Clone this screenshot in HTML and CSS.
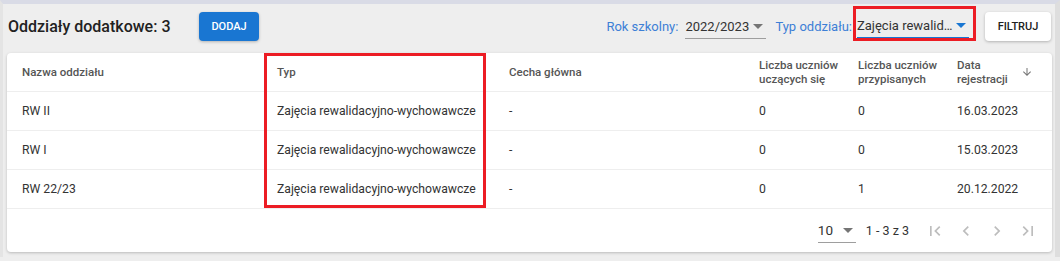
FILE: index.html
```html
<!DOCTYPE html>
<html lang="pl">
<head>
<meta charset="UTF-8" />
<title>Oddziały dodatkowe</title>
<link rel="stylesheet" href="styles.css">
</head>
<body>
<div class="page">

  <div class="toolbar">
    <h1 class="title">Oddziały dodatkowe: 3</h1>
    <button class="btn btn-primary">DODAJ</button>

    <div class="filters">
      <label class="filter-label">Rok szkolny:</label>
      <div class="select select-year">
        <span class="select-value">2022/2023</span>
        <span class="caret"></span>
      </div>
      <label class="filter-label label-type">Typ oddziału:</label>
      <div class="select select-type">
        <span class="select-value">Zajęcia rewalid…</span>
        <span class="caret caret-blue"></span>
        <span class="mark mark-filter"></span>
      </div>
      <button class="btn btn-light">FILTRUJ</button>
    </div>
  </div>

  <div class="card">
    <div class="row head">
      <div class="cell">Nazwa oddziału</div>
      <div class="cell">Typ</div>
      <div class="cell">Cecha główna</div>
      <div class="cell">Liczba uczniów<br>uczących się</div>
      <div class="cell">Liczba uczniów<br>przypisanych</div>
      <div class="cell sort">
        <span>Data<br>rejestracji</span>
        <svg width="12" height="12" viewBox="0 0 24 24"><path d="M20 12l-1.41-1.41L13 16.17V4h-2v12.17l-5.58-5.59L4 12l8 8 8-8z" fill="#757575"/></svg>
      </div>
    </div>

    <div class="row">
      <div class="cell">RW II</div>
      <div class="cell">Zajęcia rewalidacyjno-wychowawcze</div>
      <div class="cell">-</div>
      <div class="cell">0</div>
      <div class="cell">0</div>
      <div class="cell">16.03.2023</div>
    </div>
    <div class="row">
      <div class="cell">RW I</div>
      <div class="cell">Zajęcia rewalidacyjno-wychowawcze</div>
      <div class="cell">-</div>
      <div class="cell">0</div>
      <div class="cell">0</div>
      <div class="cell">15.03.2023</div>
    </div>
    <div class="row">
      <div class="cell">RW 22/23</div>
      <div class="cell">Zajęcia rewalidacyjno-wychowawcze</div>
      <div class="cell">-</div>
      <div class="cell">0</div>
      <div class="cell">1</div>
      <div class="cell">20.12.2022</div>
    </div>

    <div class="pager">
      <div class="select select-rows">
        <span class="select-value">10</span>
        <span class="caret"></span>
      </div>
      <span class="pager-info">1 - 3 z 3</span>
      <div class="pager-icons">
        <svg width="20" height="20" viewBox="0 0 24 24"><path d="M18.41 16.59L13.82 12l4.59-4.59L17 6l-6 6 6 6zM6 6h2v12H6z" fill="#bdbdbd"/></svg>
        <svg width="20" height="20" viewBox="0 0 24 24"><path d="M15.41 7.41L14 6l-6 6 6 6 1.41-1.41L10.83 12z" fill="#bdbdbd"/></svg>
        <svg width="20" height="20" viewBox="0 0 24 24"><path d="M10 6L8.59 7.41 13.17 12l-4.58 4.59L10 18l6-6z" fill="#bdbdbd"/></svg>
        <svg width="20" height="20" viewBox="0 0 24 24"><path d="M5.59 7.41L10.18 12l-4.59 4.59L7 18l6-6-6-6zM16 6h2v12h-2z" fill="#bdbdbd"/></svg>
      </div>
    </div>

    <span class="mark mark-column"></span>
  </div>

</div>
</body>
</html>
```

FILE: styles.css
```css
body {
  margin: 0;
  font-family: Roboto, "Liberation Sans", Arial, sans-serif;
  background: #eeeeee;
  color: #333;
}
.page {
  height: 257px;
  border-top: 4px solid #d9dbe6;
  border-left: 3px solid #e4e4e4;
  border-right: 5px solid #dedede;
  box-sizing: border-box;
  width: 1060px;
}
/* Toolbar */
.toolbar {
  display: flex;
  align-items: center;
  height: 45px;
  padding: 0 0 0 5px;
}
.title {
  margin: 0;
  font-size: 16px;
  font-weight: 500;
  color: #212121;
  width: 191px;
}
.btn {
  font-family: inherit;
  border: none;
  border-radius: 4px;
  height: 29px;
  font-size: 11px;
  font-weight: 500;
  cursor: pointer;
}
.btn-primary {
  background: #1976d2;
  color: #fff;
  width: 60px;
  box-shadow: 0 1px 3px rgba(0,0,0,0.25);
}
.btn-light {
  background: #fff;
  color: #212121;
  width: 66px;
  margin-left: 16px;
  box-shadow: 0 1px 3px rgba(0,0,0,0.25);
}
.filters {
  display: flex;
  align-items: center;
  margin-left: auto;
  margin-right: 4px;
}
.filter-label {
  color: #3d7fd6;
  font-size: 13px;
  margin-right: 7px;
  white-space: nowrap;
}
.label-type { margin-right: 5px; }
.select {
  position: relative;
  display: flex;
  align-items: center;
  height: 24px;
  border-bottom: 1px solid #9e9e9e;
  font-size: 13px;
  color: #333;
  white-space: nowrap;
}
.select-year { width: 81px; margin-right: 9px; }
.select-type {
  width: 112px;
  border-bottom: 2px solid #1976d2;
  height: 23px;
}
.select-value { flex: 1; }
.caret {
  width: 0; height: 0;
  border-left: 5px solid transparent;
  border-right: 5px solid transparent;
  border-top: 5px solid #757575;
  margin-right: 3px;
}
.caret-blue { border-top-color: #1976d2; }
/* Red highlight boxes */
.mark {
  position: absolute;
  border: 3px solid #ec1c24;
  box-sizing: border-box;
  pointer-events: none;
}
.mark-filter {
  left: -4px; top: -8px;
  width: 123px; height: 35px;
}
.mark-column {
  left: 257px; top: 0;
  width: 222px; height: 155px;
}
/* Table card */
.card {
  position: relative;
  margin: 4px 3px 0 4px;
  background: #fff;
  border-radius: 4px;
  box-shadow: 0 1px 3px rgba(0,0,0,0.22);
}
.row {
  display: grid;
  grid-template-columns: 256px 232px 250px 99px 99px 1fr;
  height: 38px;
  align-items: center;
  border-bottom: 1px solid #eeeeee;
  font-size: 12.2px;
  color: #333;
}
.row.head {
  font-size: 11.5px;
  font-weight: 500;
  color: #555;
  line-height: 14px;
}
.cell { padding-left: 15px; white-space: nowrap; }
.cell:nth-child(n+2) { padding-left: 14px; }
.sort {
  display: flex;
  align-items: center;
  justify-content: space-between;
  padding-right: 19px;
}
.pager {
  display: flex;
  align-items: center;
  justify-content: flex-end;
  height: 43px;
  font-size: 12.5px;
  color: #333;
}
.select-rows {
  width: 38px;
  font-size: 13.5px;
  margin-right: 10px;
}
.pager-info { margin-right: 16px; }
.pager-icons {
  display: flex;
  gap: 11px;
  margin-right: 14px;
}
```
